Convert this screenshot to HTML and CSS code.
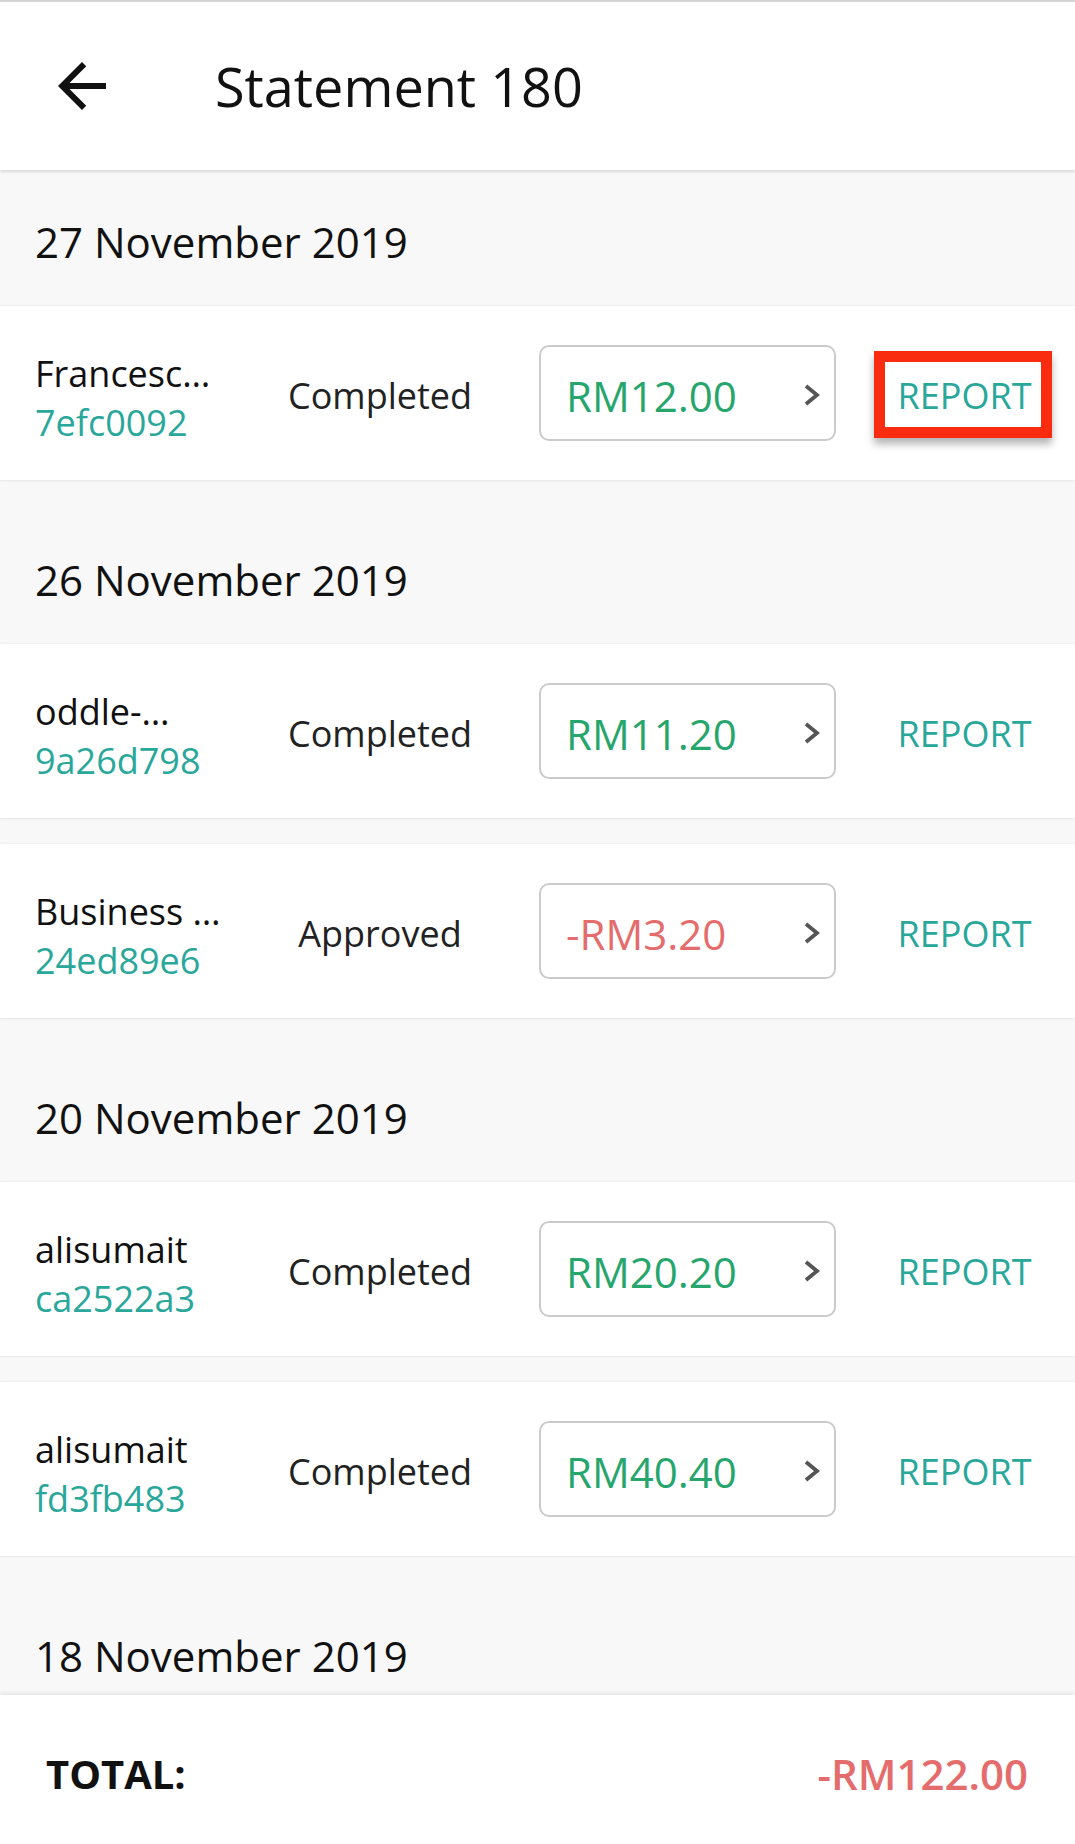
FILE: index.html
```html
<!DOCTYPE html>
<html lang="en">
<head>
  <meta charset="UTF-8" />
  <meta name="viewport" content="width=device-width, initial-scale=1.0"/>
  <title>Statement 180</title>
  <link rel="stylesheet" href="styles.css">
</head>
<body>

  <header class="topbar">
    <svg class="back" viewBox="0 0 24 24" width="72" height="72">
      <path d="M20 11H7.83l5.59-5.59L12 4l-8 8 8 8 1.41-1.41L7.83 13H20v-2z" fill="#111"/>
    </svg>
    <h1>Statement 180</h1>
  </header>

  <main class="list">

    <section class="group">
      <div class="date">27 November 2019</div>
      <div class="rows">
        <div class="row">
          <div class="payee"><div class="name">Francesc…</div><div class="ref">7efc0092</div></div>
          <div class="status">Completed</div>
          <div class="amount">
            <span class="value plus">RM12.00</span>
            <svg class="chev" viewBox="0 0 18 24" width="18" height="24"><polyline points="3,3 14,12 3,21" /></svg>
          </div>
          <div class="action"><span class="report marked">REPORT</span></div>
        </div>
      </div>
    </section>

    <section class="group">
      <div class="date">26 November 2019</div>
      <div class="rows">
        <div class="row">
          <div class="payee"><div class="name">oddle-…</div><div class="ref">9a26d798</div></div>
          <div class="status">Completed</div>
          <div class="amount">
            <span class="value plus">RM11.20</span>
            <svg class="chev" viewBox="0 0 18 24" width="18" height="24"><polyline points="3,3 14,12 3,21" /></svg>
          </div>
          <div class="action"><span class="report">REPORT</span></div>
        </div>
        <div class="row">
          <div class="payee"><div class="name">Business …</div><div class="ref">24ed89e6</div></div>
          <div class="status">Approved</div>
          <div class="amount">
            <span class="value minus">-RM3.20</span>
            <svg class="chev" viewBox="0 0 18 24" width="18" height="24"><polyline points="3,3 14,12 3,21" /></svg>
          </div>
          <div class="action"><span class="report">REPORT</span></div>
        </div>
      </div>
    </section>

    <section class="group">
      <div class="date">20 November 2019</div>
      <div class="rows">
        <div class="row">
          <div class="payee"><div class="name">alisumait</div><div class="ref">ca2522a3</div></div>
          <div class="status">Completed</div>
          <div class="amount">
            <span class="value plus">RM20.20</span>
            <svg class="chev" viewBox="0 0 18 24" width="18" height="24"><polyline points="3,3 14,12 3,21" /></svg>
          </div>
          <div class="action"><span class="report">REPORT</span></div>
        </div>
        <div class="row">
          <div class="payee"><div class="name">alisumait</div><div class="ref">fd3fb483</div></div>
          <div class="status">Completed</div>
          <div class="amount">
            <span class="value plus">RM40.40</span>
            <svg class="chev" viewBox="0 0 18 24" width="18" height="24"><polyline points="3,3 14,12 3,21" /></svg>
          </div>
          <div class="action"><span class="report">REPORT</span></div>
        </div>
      </div>
    </section>

    <section class="group">
      <div class="date">18 November 2019</div>
    </section>

  </main>

  <footer class="total">
    <span class="total-label">TOTAL:</span>
    <span class="total-value">-RM122.00</span>
  </footer>

</body>
</html>
```

FILE: styles.css
```css
html, body {
  margin: 0;
  padding: 0;
  height: 100%;
}

body {
  font-family: 'Open Sans', 'Noto Sans', sans-serif;
  color: #111;
  background: #f8f8f8;
  display: flex;
  flex-direction: column;
  overflow: hidden;
}

.topbar {
  flex: none;
  height: 168px;
  display: flex;
  align-items: center;
  padding-left: 46px;
  background: white;
  border-top: 2px solid #d4d4d4;
  box-shadow: 0 2px 3px rgba(0,0,0,0.13);
  position: relative;
  z-index: 2;
}

.back {
  display: block;
}

.topbar h1 {
  margin: 0 0 0 97px;
  font-size: 54px;
  font-weight: 400;
  color: #111;
}

.list {
  flex: 1;
  overflow: hidden;
}

.group {
  margin-bottom: 28px;
}

.date {
  height: 136px;
  box-sizing: border-box;
  padding: 43px 0 0 35px;
  font-size: 42px;
  color: #111;
}

.rows {
  display: flex;
  flex-direction: column;
  gap: 26px;
}

.row {
  height: 174px;
  display: flex;
  align-items: center;
  padding-left: 35px;
  background: white;
  box-shadow: 0 1px 2px rgba(0,0,0,0.07), 0 -1px 2px rgba(0,0,0,0.04);
}

.payee {
  width: 200px;
  padding-top: 9px;
  font-size: 36px;
}

.name {
  color: #111;
  white-space: nowrap;
}

.ref {
  color: #2aa79b;
}

.status {
  width: 290px;
  padding-top: 5px;
  text-align: center;
  font-size: 36px;
  color: #222;
}

.amount {
  margin-left: 14px;
  width: 297px;
  height: 96px;
  box-sizing: border-box;
  border: 2px solid #cbcbcb;
  border-radius: 10px;
  display: flex;
  align-items: center;
  justify-content: space-between;
  padding: 4px 13px 0 25px;
}

.value {
  font-size: 42px;
}

.plus {
  color: #26a56c;
}

.minus {
  color: #e46c6c;
}

.chev {
  display: block;
}

.chev polyline {
  fill: none;
  stroke: #555;
  stroke-width: 3.8;
}

.action {
  margin-left: 18px;
  width: 221px;
  padding-top: 5px;
  text-align: center;
}

.report {
  font-size: 36px;
  color: #2aa79b;
  position: relative;
  display: inline-block;
}

.report.marked::after {
  content: "";
  position: absolute;
  top: -20px;
  bottom: -18px;
  left: -24px;
  right: -21px;
  border: 11px solid #f92c10;
  box-shadow: 0 6px 8px rgba(0,0,0,0.3);
}

.total {
  flex: none;
  height: 149px;
  box-sizing: border-box;
  padding: 8px 47px 0 46px;
  display: flex;
  align-items: center;
  justify-content: space-between;
  background: white;
  box-shadow: 0 -2px 4px rgba(0,0,0,0.08);
  position: relative;
  z-index: 2;
}

.total-label {
  font-size: 40px;
  font-weight: 700;
  color: #111;
}

.total-value {
  font-size: 42px;
  font-weight: 600;
  color: #e46c6c;
}
```
